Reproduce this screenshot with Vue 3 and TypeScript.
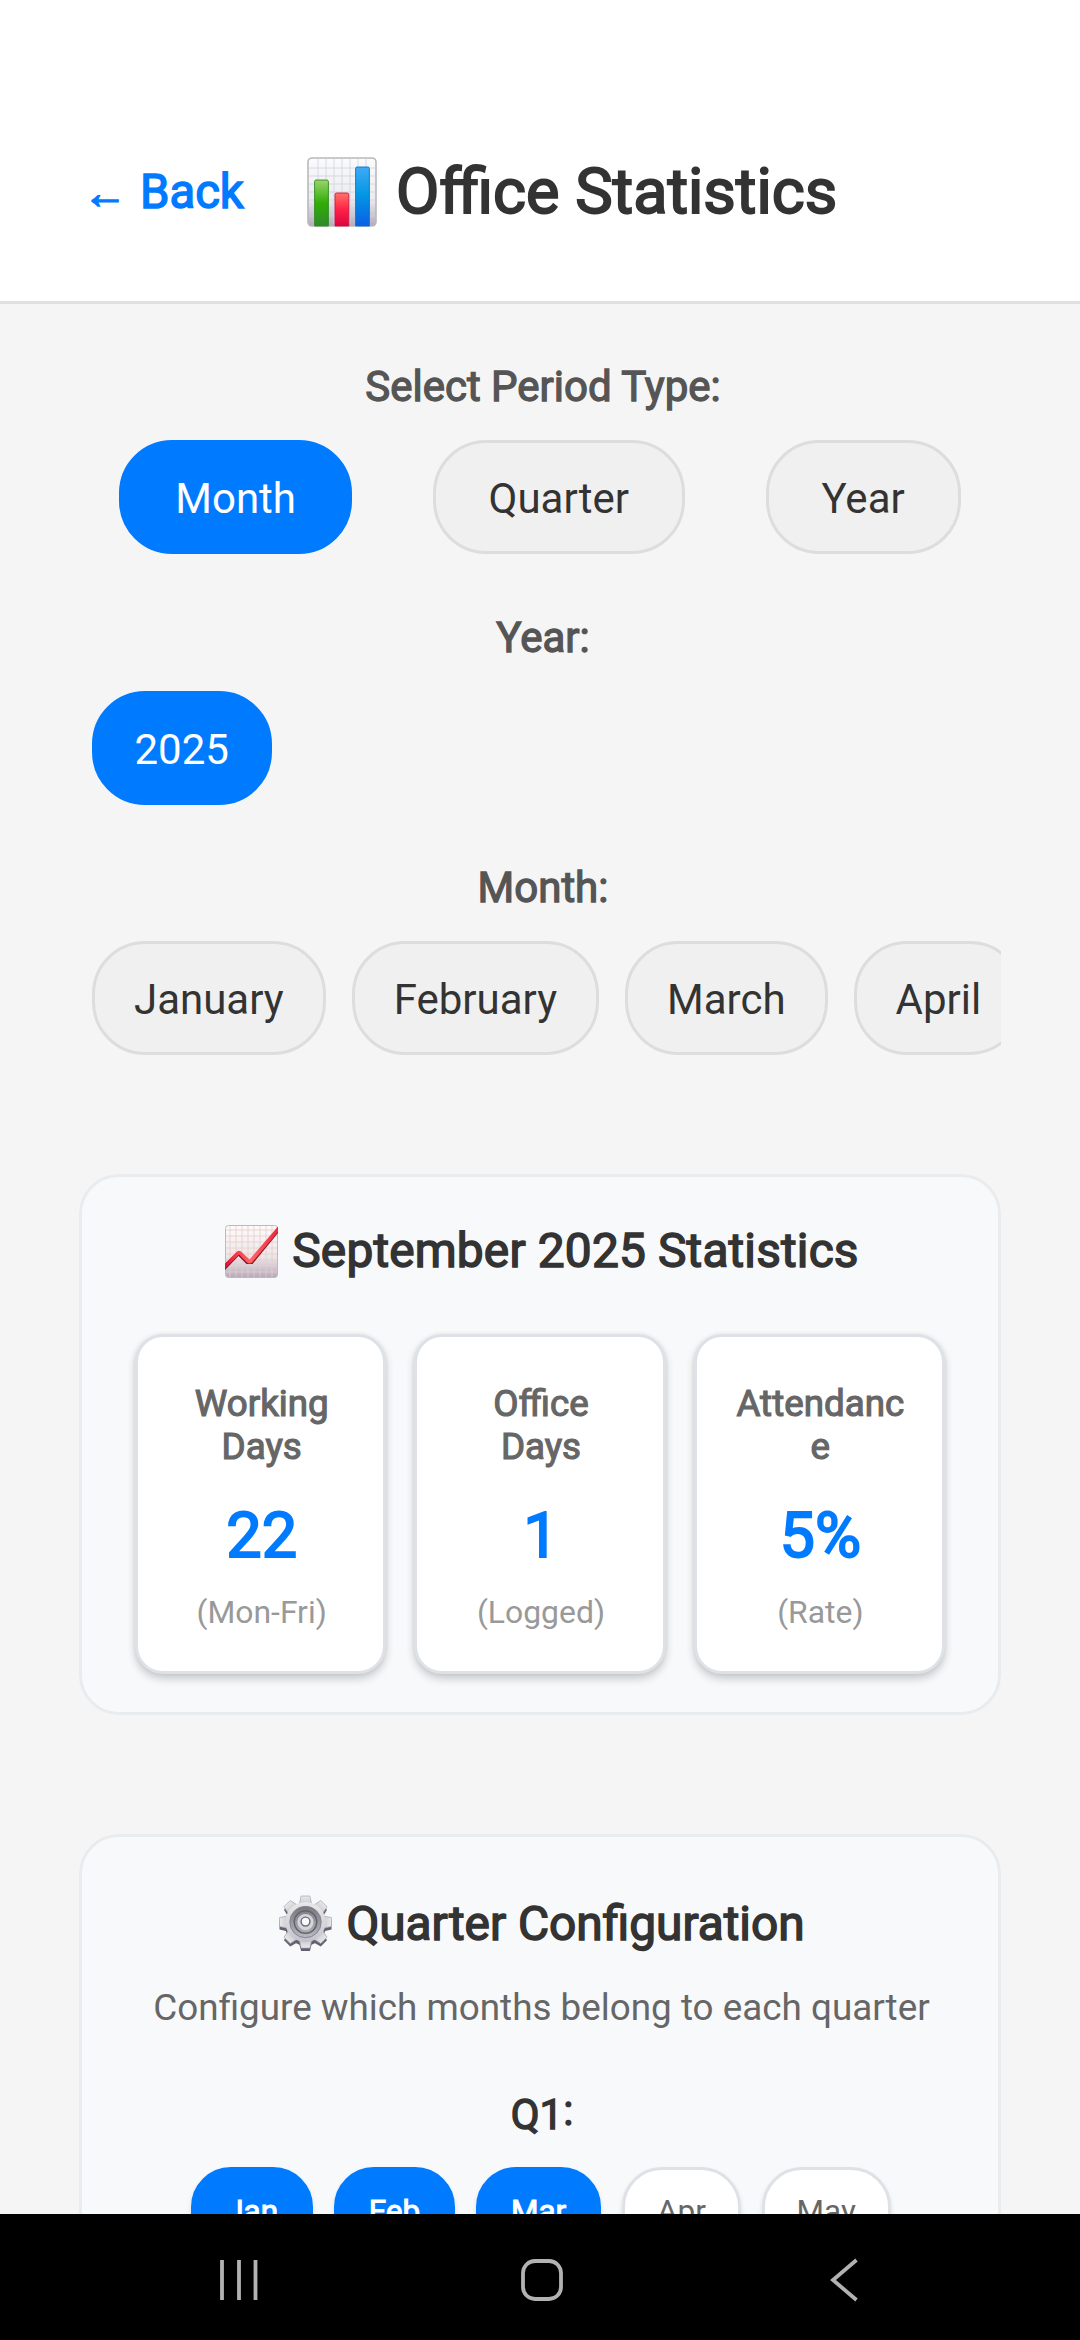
<script setup lang="ts">
interface Stat {
  label: string
  value: string
  note: string
}

interface MonthChip {
  name: string
  selected: boolean
}

const periodTypes: string[] = ['Month', 'Quarter', 'Year']
const activePeriod = 'Month'
const years: string[] = ['2025']
const activeYear = '2025'
const months: string[] = ['January', 'February', 'March', 'April']

const stats: Stat[] = [
  { label: 'Working Days', value: '22', note: '(Mon-Fri)' },
  { label: 'Office Days', value: '1', note: '(Logged)' },
  { label: 'Attendance', value: '5%', note: '(Rate)' },
]

const quarterMonths: MonthChip[] = [
  { name: 'Jan', selected: true },
  { name: 'Feb', selected: true },
  { name: 'Mar', selected: true },
  { name: 'Apr', selected: false },
  { name: 'May', selected: false },
]

const gearTeeth: number[] = [0, 45, 90, 135, 180, 225, 270, 315]
const gridLines: number[] = [11, 19, 27, 35, 43, 51, 59]
</script>

<template>
  <div class="screen">
    <header class="header">
      <div class="back bold"><span class="arrow">←</span><span>Back</span></div>
      <svg class="bar-icon" viewBox="0 0 70 70">
        <defs>
          <linearGradient id="paper" x1="0" y1="0" x2="0" y2="1">
            <stop offset="0" stop-color="#fbfbfc" />
            <stop offset="0.6" stop-color="#ececf0" />
            <stop offset="1" stop-color="#b3abbd" />
          </linearGradient>
          <linearGradient id="green" x1="0" y1="0" x2="0" y2="1">
            <stop offset="0" stop-color="#9bd46c" />
            <stop offset="0.5" stop-color="#2fae05" />
            <stop offset="1" stop-color="#2f8a2c" />
          </linearGradient>
          <linearGradient id="red" x1="0" y1="0" x2="0" y2="1">
            <stop offset="0" stop-color="#ff7467" />
            <stop offset="0.5" stop-color="#ff2147" />
            <stop offset="1" stop-color="#dc0440" />
          </linearGradient>
          <linearGradient id="blue" x1="0" y1="0" x2="0" y2="1">
            <stop offset="0" stop-color="#41aaf6" />
            <stop offset="0.45" stop-color="#0398e4" />
            <stop offset="1" stop-color="#0a5fe6" />
          </linearGradient>
        </defs>
        <rect x="1" y="1" width="68" height="68" rx="4" fill="url(#paper)" stroke="#b9b8bd" stroke-width="1.6" />
        <g stroke="#cfd3df" stroke-width="0.8">
          <line v-for="g in gridLines" :key="'v' + g" :x1="g" y1="2" :x2="g" y2="67" />
          <line v-for="g in gridLines" :key="'h' + g" x1="2" :y1="g" x2="68" :y2="g" />
        </g>
        <path d="M7.600 69V24.500a1.500 1.500 0 0 1 1.500-1.500h10.800a1.500 1.500 0 0 1 1.500 1.500V69z" fill="url(#green)" stroke="#2f8a1e" stroke-width="0.9" />
        <path d="M28 69V37.500a1.500 1.500 0 0 1 1.500-1.500h10.800a1.500 1.500 0 0 1 1.500 1.500V69z" fill="url(#red)" stroke="#d0163c" stroke-width="0.9" />
        <path d="M48.600 69V11.500a1.500 1.500 0 0 1 1.500-1.500h10.800a1.500 1.500 0 0 1 1.500 1.500V69z" fill="url(#blue)" stroke="#0a73c4" stroke-width="0.9" />
      </svg>
      <h1 class="title bold">Office Statistics</h1>
    </header>

    <main class="content">
      <section class="picker first">
        <h2 class="label bold">Select Period Type:</h2>
        <div class="chips spread">
          <div v-for="p in periodTypes" :key="p" class="chip wide" :class="{ active: p === activePeriod }">{{ p }}</div>
        </div>
      </section>

      <section class="picker">
        <h2 class="label bold">Year:</h2>
        <div class="chips strip">
          <div v-for="y in years" :key="y" class="chip year" :class="{ active: y === activeYear }">{{ y }}</div>
        </div>
      </section>

      <section class="picker last">
        <h2 class="label bold">Month:</h2>
        <div class="chips strip">
          <div v-for="m in months" :key="m" class="chip">{{ m }}</div>
        </div>
      </section>

      <section class="card statistics">
        <h2 class="card-title bold">
          <svg class="trend-icon" viewBox="0 0 53 53">
            <defs>
              <linearGradient id="sheet" x1="0" y1="0" x2="0" y2="1">
                <stop offset="0" stop-color="#fcfbfb" />
                <stop offset="0.6" stop-color="#ebe7e9" />
                <stop offset="1" stop-color="#b5aabd" />
              </linearGradient>
              <linearGradient id="line" x1="0" y1="0" x2="1" y2="0">
                <stop offset="0" stop-color="#d81434" />
                <stop offset="0.25" stop-color="#ff3d4d" />
                <stop offset="0.5" stop-color="#ff6468" />
                <stop offset="1" stop-color="#f0263b" />
              </linearGradient>
            </defs>
            <rect x="0.500" y="0.500" width="52" height="52" rx="3" fill="url(#sheet)" stroke="#bdb9c2" />
            <g stroke="#eccac9" stroke-width="0.8">
              <line v-for="n in 8" :key="'v' + n" :x1="n * 6 - 1" y1="1" :x2="n * 6 - 1" y2="52" />
              <line v-for="n in 8" :key="'h' + n" x1="1" :y1="n * 6 - 1" x2="52" :y2="n * 6 - 1" />
            </g>
            <path d="M0 40.500 13.500 28 22 36.500h5L53 2v6L27.500 39h-6L13.500 31 0 45z" fill="#871427" />
            <path d="M0 38.500 12 26.500q2-1.500 4 0l8.500 8L53 1.500v5.500L27 37.500q-2.500 2-5 0L14 29.500 0 43.500z" fill="url(#line)" />
          </svg>
          <span class="period-name">September 2025 Statistics</span>
        </h2>
        <div class="stat-row">
          <div v-for="s in stats" :key="s.label" class="stat">
            <div class="stat-label bold">{{ s.label }}</div>
            <div class="stat-value bold">{{ s.value }}</div>
            <div class="stat-note">{{ s.note }}</div>
          </div>
        </div>
      </section>

      <section class="card quarters">
        <h2 class="card-title bold">
          <svg class="gear-icon" viewBox="0 0 54 58">
            <defs>
              <linearGradient id="metal" x1="0" y1="0" x2="0" y2="1">
                <stop offset="0" stop-color="#e9e9ea" />
                <stop offset="0.55" stop-color="#d6d6da" />
                <stop offset="1" stop-color="#c3c0cd" />
              </linearGradient>
              <linearGradient id="hub" x1="0" y1="0" x2="0" y2="1">
                <stop offset="0" stop-color="#777780" />
                <stop offset="1" stop-color="#b9b9c2" />
              </linearGradient>
            </defs>
            <g fill="#665f70" transform="translate(27 30.500)">
              <circle r="21" />
              <path v-for="a in gearTeeth" :key="'s' + a" d="M-6.500-19-4.500-26.500h9L6.500-19z" :transform="`rotate(${a})`" />
            </g>
            <g fill="url(#metal)" stroke="#a5a4ab" stroke-width="0.7" transform="translate(27 27.500)">
              <path v-for="a in gearTeeth" :key="'t' + a" d="M-6.500-17-4.500-26.500h9L6.500-17z" :transform="`rotate(${a})`" />
            </g>
            <circle cx="27" cy="27.500" r="20.500" fill="url(#metal)" />
            <circle cx="27" cy="27.500" r="16" fill="url(#hub)" stroke="#85848d" stroke-width="1" />
            <circle cx="27" cy="27.500" r="11.500" fill="none" stroke="#66656e" stroke-width="1.500" />
            <circle cx="27" cy="27.500" r="6.500" fill="#fafafc" stroke="#d5d5da" stroke-width="3.500" />
            <circle cx="27" cy="27" r="4.500" fill="none" stroke="#6c6a74" stroke-width="1.500" />
          </svg>
          <span>Quarter Configuration</span>
        </h2>
        <p class="hint">Configure which months belong to each quarter</p>
        <h3 class="quarter-name bold">Q1<span class="colon">:</span></h3>
        <div class="month-row">
          <div v-for="m in quarterMonths" :key="m.name" class="month" :class="{ active: m.selected, bold: m.selected }">{{ m.name }}</div>
        </div>
      </section>
    </main>

    <nav class="navbar">
      <svg class="nav-icon" viewBox="0 0 46 46" fill="none" stroke="#b2b2b2" stroke-width="3.800">
        <path d="M6 3v40M23 3v40M39.500 3v40" />
      </svg>
      <svg class="nav-icon" viewBox="0 0 46 46" fill="none" stroke="#b2b2b2" stroke-width="3.800">
        <rect x="4" y="4" width="38" height="38" rx="12" />
      </svg>
      <svg class="nav-icon" viewBox="0 0 46 46" fill="none" stroke="#b2b2b2" stroke-width="3.800">
        <path d="M35.500 3 12 23l23.500 20" />
      </svg>
    </nav>
  </div>
</template>

<style>
body {
  margin: 0;
}
</style>

<style scoped>
.screen {
  display: flex;
  flex-direction: column;
  width: 1080px;
  height: 2340px;
  overflow: hidden;
  background: #f5f5f5;
  color: #333;
  font-family: Roboto, "Noto Sans", sans-serif;
  font-size: 42px;
  font-weight: 400;
}

h1,
h2,
h3,
p {
  margin: 0;
  font-weight: 400;
}

/* Regular letterforms thickened evenly */
.bold {
  -webkit-text-stroke: 0.031em currentColor;
}

.header {
  display: flex;
  flex: none;
  align-items: center;
  box-sizing: border-box;
  height: 304px;
  padding: 83px 79px 0 83px;
  border-bottom: 3px solid #e0e0e0;
  background: #fff;
}

.back {
  display: flex;
  align-items: center;
  width: 224px;
  color: #007bff;
  font-size: 47.25px;
  line-height: 56px;
}

.arrow {
  width: 57px;
  padding-top: 2px;
  font-family: "Liberation Sans", sans-serif;
  font-size: 44px;
}

.bar-icon {
  flex: none;
  width: 70px;
  height: 70px;
}

.title {
  margin-left: 19px;
  font-size: 63px;
  line-height: 76px;
  white-space: nowrap;
}

.content {
  display: flex;
  flex: 1;
  flex-direction: column;
  min-height: 0;
  padding: 0 79px;
  overflow: hidden;
}

.picker {
  flex: none;
  margin-top: 59px;
}

.picker.first,
.picker.last {
  margin-top: 58px;
}

.label {
  padding-left: 6px;
  color: #555;
  font-size: 42px;
  line-height: 50px;
  text-align: center;
}

.chips {
  display: flex;
  margin-top: 28px;
}

.spread {
  justify-content: space-around;
}

.strip {
  gap: 26px;
  padding-left: 13px;
  overflow: hidden;
}

.chip {
  flex: none;
  box-sizing: border-box;
  height: 114px;
  padding: 2px 39px 0;
  border: 3px solid #ddd;
  border-radius: 53px;
  background: #f0f0f0;
  line-height: 107px;
}

.chip.wide {
  padding: 2px 52.800px 0;
}

.chip.year {
  padding: 2px 40px 0 39.500px;
}

.chip.active {
  border-color: #007bff;
  background: #007bff;
  color: #fff;
}

.card {
  flex: none;
  box-sizing: border-box;
  border: 3px solid #e9ecef;
  border-radius: 40px;
  background: #f8f9fb;
}

.statistics {
  height: 541px;
  margin-top: 119px;
  padding: 46px 53px 0;
}

.quarters {
  height: 900px;
  margin-top: 119px;
  padding: 58px 53px 0;
}

.card-title {
  display: flex;
  align-items: center;
  justify-content: center;
  padding-left: 4px;
  font-size: 47.800px;
  line-height: 56px;
}

.period-name {
  letter-spacing: 0.180px;
}

.trend-icon {
  width: 53px;
  height: 53px;
  margin-right: 14px;
}

.gear-icon {
  width: 53px;
  height: 57px;
  margin-right: 14px;
}

.stat-row {
  display: flex;
  gap: 28px;
  margin-top: 55px;
}

.stat {
  flex: 1 1 0;
  box-sizing: border-box;
  height: 340px;
  padding: 45px 34px 0 36px;
  border: 3px solid #dee2e6;
  border-radius: 28px;
  background: #fff;
  box-shadow: 0 5px 8px rgba(0, 0, 0, 0.19), 0 0 4px rgba(0, 0, 0, 0.07);
  text-align: center;
}

.stat-label {
  color: #666;
  font-size: 36.750px;
  line-height: 43px;
  overflow-wrap: anywhere;
}

.stat-value {
  margin-top: 31px;
  color: #007bff;
  font-size: 63px;
  line-height: 74px;
}

.stat-note {
  margin-top: 21px;
  color: #999;
  font-size: 31.900px;
  line-height: 37px;
}

.hint {
  margin-top: 34px;
  padding-left: 3px;
  color: #666;
  font-size: 36.850px;
  line-height: 43px;
  text-align: center;
  white-space: nowrap;
}

.quarter-name {
  margin-top: 61px;
  padding-left: 4px;
  font-size: 42px;
  line-height: 50px;
  text-align: center;
}

.colon {
  position: relative;
  top: -4px;
}

.month-row {
  display: flex;
  justify-content: center;
  gap: 20.700px;
  margin-top: 27px;
  padding-left: 2px;
}

.month {
  box-sizing: border-box;
  height: 88px;
  padding: 1px 32px 0;
  border: 3px solid #dee2e6;
  border-radius: 40px;
  background: #fff;
  box-shadow: 0 3px 5px rgba(0, 0, 0, 0.12);
  color: #666;
  font-size: 31.500px;
  line-height: 82px;
}

.month.active {
  border-color: #007bff;
  background: #007bff;
  color: #fff;
}

.navbar {
  display: flex;
  flex: none;
  align-items: center;
  justify-content: space-between;
  box-sizing: border-box;
  height: 126px;
  padding: 6px 213px 0 216px;
  background: #000;
}

.nav-icon {
  width: 46px;
  height: 46px;
}
</style>
